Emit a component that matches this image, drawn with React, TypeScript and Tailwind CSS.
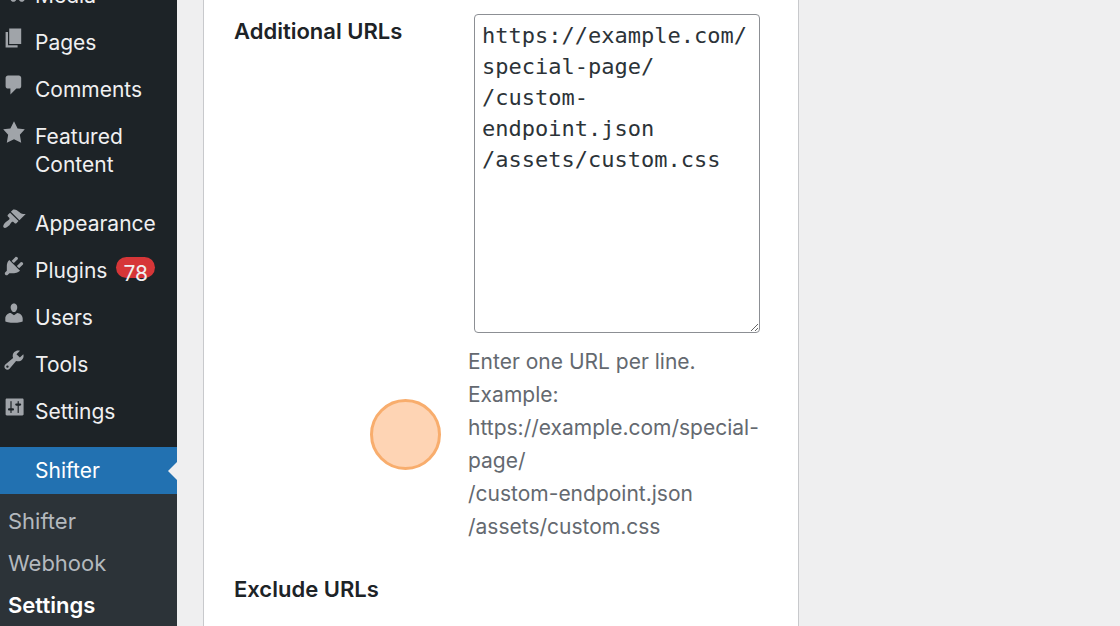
import type { ReactNode } from "react";

const paths = {
  media:
    "M13 11V4c0-.55-.45-1-1-1h-1.67L9 1H5L3.67 3H2c-.55 0-1 .45-1 1v7c0 .55.45 1 1 1h10c.55 0 1-.45 1-1zM7 4.5c1.38 0 2.5 1.12 2.5 2.5S8.38 9.5 7 9.5 4.5 8.38 4.5 7 5.62 4.5 7 4.5zM14 6h5v10.5c0 1.38-1.12 2.5-2.5 2.5S14 17.88 14 16.5s1.12-2.5 2.5-2.5c.17 0 .34.02.5.05V9h-3V6zm-4 8.05V13h2v3.5c0 1.38-1.12 2.5-2.5 2.5S7 17.88 7 16.5 8.12 14 9.5 14c.17 0 .34.02.5.05z",
  pages: "M6 15V2h10v13H6zM5 16h8v2H3V5h2v11z",
  comments:
    "M5 2h9c1.1 0 2 .9 2 2v7c0 1.1-.9 2-2 2h-2l-5 5v-5H5c-1.1 0-2-.9-2-2V4c0-1.1.9-2 2-2z",
  star: "M10 1l3 6 6 .75-4.12 4.62L16 19l-6-3-6 3 1.13-6.63L1 7.75 7 7z",
  appearance:
    "M14.48 11.06L7.41 3.99l1.5-1.5c.5-.56 2.3-.47 3.51.32 1.21.8 1.43 1.28 2.91 2.1 1.18.64 2.45 1.26 4.45.85zm-.71.71L6.7 4.7 4.93 6.47c-.39.39-.39 1.02 0 1.41l1.06 1.06c.39.39.39 1.03 0 1.42-.6.6-1.43 1.11-2.21 1.69-.35.26-.7.53-1.01.84C1.43 14.23.4 16.08 1.4 17.07c.99 1 2.84-.03 4.18-1.36.31-.31.58-.66.85-1.02.57-.78 1.08-1.61 1.69-2.21.39-.39 1.02-.39 1.41 0l1.06 1.06c.39.39 1.02.39 1.41 0z",
  plugins:
    "M13.11 4.36L9.87 7.6 8 5.73l3.24-3.24c.35-.34 1.05-.2 1.56.32.52.51.66 1.21.31 1.55zm-8 1.77l.91-1.12 9.01 9.01-1.19.84c-.71.71-2.63 1.16-3.82 1.16H6.14L4.9 17.26c-.59.59-1.54.59-2.12 0-.59-.58-.59-1.53 0-2.12l1.24-1.24v-3.88c0-1.13.4-3.19 1.09-3.89zm7.26 3.97l3.24-3.24c.34-.35 1.04-.21 1.55.31.52.51.66 1.21.31 1.55l-3.24 3.25z",
  users:
    "M10 9.25c-2.27 0-2.73-3.44-2.73-3.44C7 4.02 7.82 2 9.97 2c2.16 0 2.98 2.02 2.71 3.81 0 0-.41 3.44-2.68 3.44zm0 2.57L12.72 10c2.39 0 4.52 2.33 4.52 4.53v2.49s-3.65 1.13-7.24 1.13c-3.65 0-7.24-1.13-7.24-1.13v-2.49c0-2.25 1.94-4.48 4.47-4.48z",
  tools:
    "M16.68 9.77c-1.34 1.34-3.3 1.67-4.95.99l-5.41 6.52c-.99.99-2.59.99-3.58 0s-.99-2.59 0-3.57l6.52-5.42c-.68-1.65-.35-3.61.99-4.95 1.28-1.28 3.12-1.62 4.72-1.06l-2.89 2.89 2.82 2.82 2.86-2.87c.53 1.58.18 3.39-1.08 4.65zM3.81 16.21c.4.39 1.04.39 1.43 0 .4-.4.4-1.04 0-1.43-.39-.4-1.03-.4-1.43 0-.39.39-.39 1.03 0 1.43z",
  settings:
    "M18 16V4c0-.55-.45-1-1-1H4c-.55 0-1 .45-1 1v12c0 .55.45 1 1 1h13c.55 0 1-.45 1-1zM8 11h1c.55 0 1 .45 1 1s-.45 1-1 1H8v1.5c0 .28-.22.5-.5.5s-.5-.22-.5-.5V13H6c-.55 0-1-.45-1-1s.45-1 1-1h1V5.5c0-.28.22-.5.5-.5s.5.22.5.5V11zm5-2h-1c-.55 0-1-.45-1-1s.45-1 1-1h1V5.5c0-.28.22-.5.5-.5s.5.22.5.5V7h1c.55 0 1 .45 1 1s-.45 1-1 1h-1v5.5c0 .28-.22.5-.5.5s-.5-.22-.5-.5V9z",
};

function MenuItem({ icon, children }: { icon: keyof typeof paths; children: ReactNode }) {
  return (
    <li>
      <a href="#" className="flex items-start gap-[9px] pl-[2px] text-[#f0f0f1]">
        <svg viewBox="0 0 20 20" className="mt-[7px] size-6 shrink-0 fill-[#a0a4a9]" aria-hidden="true">
          <path d={paths[icon]} />
        </svg>
        <span className="flex items-start gap-[9px] pt-[10px] pb-[9px]">{children}</span>
      </a>
    </li>
  );
}

const exampleUrls = "https://example.com/special-page/\n/custom-endpoint.json\n/assets/custom.css";

export default function App() {
  return (
    <div className="flex h-screen overflow-hidden bg-[#efeff0] font-['Inter','Liberation_Sans',sans-serif] text-[22px] leading-7 text-[#1d2327]">
      <nav aria-label="Main menu" className="w-[177px] shrink-0 bg-[#1d2327]">
        <ul className="-mt-7 text-[21px]">
          <MenuItem icon="media">Media</MenuItem>
          <MenuItem icon="pages">Pages</MenuItem>
          <MenuItem icon="comments">Comments</MenuItem>
          <MenuItem icon="star">Featured Content</MenuItem>
          <li aria-hidden="true" className="h-3" />
          <MenuItem icon="appearance">Appearance</MenuItem>
          <MenuItem icon="plugins">
            Plugins
            <span className="h-[21px] rounded-full bg-[#d63638] px-[7px] leading-[34px]">78</span>
          </MenuItem>
          <MenuItem icon="users">Users</MenuItem>
          <MenuItem icon="tools">Tools</MenuItem>
          <MenuItem icon="settings">Settings</MenuItem>
          <li aria-hidden="true" className="h-3" />
          <li>
            <a href="#" className="flex h-[47px] items-center justify-between bg-[#2271b1] pl-[35px] text-white">
              Shifter
              <svg viewBox="0 0 9 18" className="h-[18px] w-[9px] fill-[#efeff0]" aria-hidden="true">
                <path d="M9 0v18L0 9z" />
              </svg>
            </a>
            <ul className="bg-[#2c3338] pt-[6px] pl-2 text-[22px] leading-[42px] text-[#b4b9be]">
              <li><a href="#">Shifter</a></li>
              <li><a href="#">Webhook</a></li>
              <li><a href="#" className="font-semibold text-white">Settings</a></li>
            </ul>
          </li>
        </ul>
      </nav>

      <main className="min-w-0 flex-1 pl-[26px]">
        <form className="grid min-h-full max-w-[596px] grid-cols-[234px_minmax(0,1fr)] content-start border-x border-[#c8c9cc] bg-white pr-[38px] pl-[30px]">
          <label htmlFor="additional-urls" className="pt-[17px] font-semibold">
            Additional URLs
          </label>
          <div className="relative pt-[14px]">
            <div className="pl-[6px]">
              <textarea
                id="additional-urls"
                defaultValue={exampleUrls}
                aria-describedby="additional-urls-help"
                spellCheck={false}
                className="block h-[319px] w-full resize overflow-hidden rounded border border-[#8c8f94] bg-white px-[7px] py-[5px] font-['DejaVu_Sans_Mono','Liberation_Mono',monospace] leading-[31px] text-[#2c3338]"
              />
            </div>
            <p id="additional-urls-help" className="mt-3 text-[21px] leading-[33px] text-[#646970]">
              Enter one URL per line.
              <br />
              Example:
              <br />
              https://example.com/special-page/
              <br />
              /custom-endpoint.json
              <br />
              /assets/custom.css
            </p>
            <span
              aria-hidden="true"
              className="absolute top-[399px] -left-[98px] size-[71px] rounded-full border-3 border-[#f8ad6d] bg-[#fed4b4]"
            />
          </div>
          <h2 className="mt-8 font-semibold">Exclude URLs</h2>
        </form>
      </main>
    </div>
  );
}
